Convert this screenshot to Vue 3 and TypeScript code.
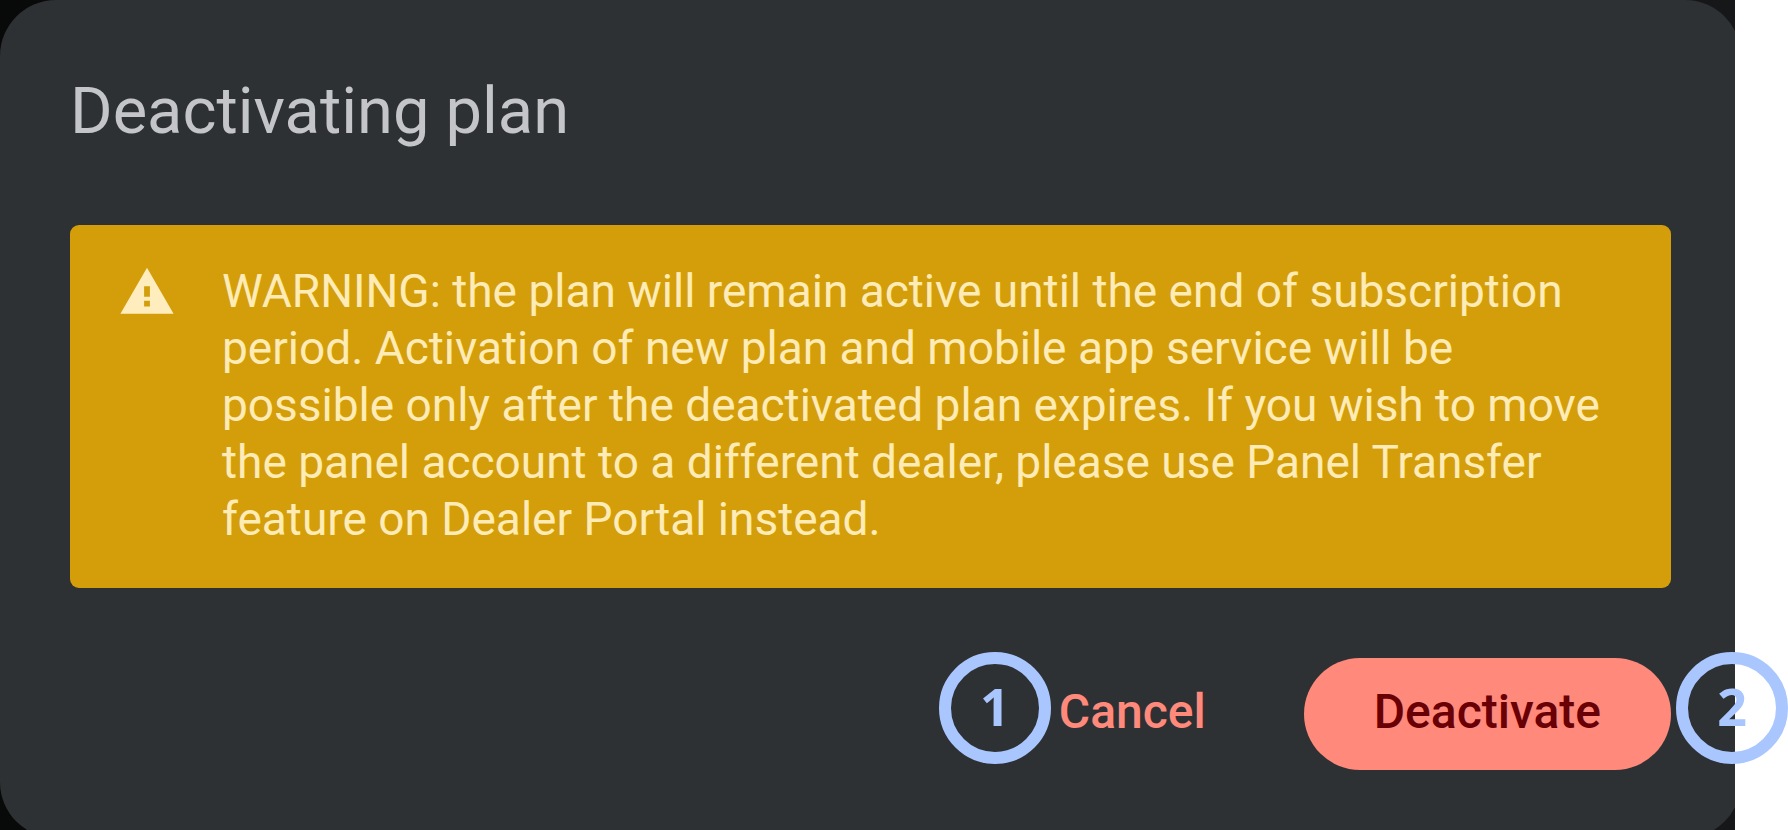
<script setup lang="ts">
interface Action {
  step: number
  label: string
  kind: 'text' | 'filled'
}

const title = 'Deactivating plan'
const message =
  'WARNING: the plan will remain active until the end of subscription period. ' +
  'Activation of new plan and mobile app service will be possible only after the ' +
  'deactivated plan expires. If you wish to move the panel account to a different ' +
  'dealer, please use Panel Transfer feature on Dealer Portal instead.'

const actions: Action[] = [
  { step: 1, label: 'Cancel', kind: 'text' },
  { step: 2, label: 'Deactivate', kind: 'filled' },
]
</script>

<template>
  <main class="stage">
    <div class="backdrop"></div>
    <section class="dialog" role="alertdialog" aria-labelledby="dialog-title" aria-describedby="dialog-message">
      <h1 id="dialog-title" class="title">{{ title }}</h1>
      <div class="alert">
        <svg class="alert-icon" viewBox="0 0 24 24" aria-hidden="true">
          <path fill-rule="evenodd" d="M1 21h22L12 2 1 21zm12.2-3h-2.4v-2.4h2.4V18zm0-4h-2.4V9.6h2.4V14z" />
        </svg>
        <p id="dialog-message" class="message">{{ message }}</p>
      </div>
      <div class="actions">
        <div v-for="action in actions" :key="action.step" class="action" :class="action.kind">
          <button type="button" class="button">{{ action.label }}</button>
          <span class="badge">{{ action.step }}</span>
        </div>
      </div>
    </section>
  </main>
</template>

<style>
body {
  margin: 0;
  background: #ffffff;
}
</style>

<style scoped>
.stage {
  position: relative;
  box-sizing: border-box;
  min-height: 100vh;
  margin-right: 53px;
  font-family: Roboto, "Liberation Sans", sans-serif;
}

.backdrop {
  position: absolute;
  inset: 0;
  overflow: hidden;
  background: linear-gradient(90deg, #080a09, #161718);
}

.backdrop::before {
  content: "";
  position: absolute;
  inset: 0 -6px -8px 0;
  border-radius: 56px;
  background: #2e3134;
}

.dialog {
  position: relative;
  padding: 71px 64px 58px 70px;
}

.title {
  margin: 0 0 74px;
  font-size: 65px;
  line-height: 80px;
  font-weight: 400;
  color: #c4c5c9;
}

.alert {
  display: flex;
  align-items: flex-start;
  gap: 46px;
  padding: 38px 48px 40px;
  border-radius: 9px;
  background: #d39e0a;
  color: #ffebb5;
}

.alert-icon {
  flex: none;
  width: 58px;
  height: 58px;
  fill: #ffedbd;
}

.message {
  flex: 1;
  margin: 0;
  font-size: 46px;
  line-height: 57px;
}

.actions {
  display: flex;
  justify-content: flex-end;
  gap: 56px;
  margin-top: 70px;
}

.action {
  position: relative;
}

.button {
  display: block;
  box-sizing: border-box;
  height: 112px;
  border: 0;
  border-radius: 56px;
  font: 500 48px/56px Roboto, "Liberation Sans", sans-serif;
  cursor: pointer;
}

.text .button {
  padding: 0 42px 4px 8px;
  background: transparent;
  color: #ff897a;
}

.filled .button {
  padding: 0 70px 4px;
  background: #ff897a;
  color: #690005;
}

.badge {
  position: absolute;
  top: -6px;
  display: flex;
  align-items: center;
  justify-content: center;
  box-sizing: border-box;
  width: 112px;
  height: 112px;
  padding-bottom: 4px;
  border: 12px solid #a9c6ff;
  border-radius: 50%;
  font: 700 52px/72px "Noto Sans", "Open Sans", sans-serif;
  color: #a9c6ff;
}

.text .badge {
  right: 100%;
}

.filled .badge {
  left: 100%;
  margin-left: 5px;
}
</style>
